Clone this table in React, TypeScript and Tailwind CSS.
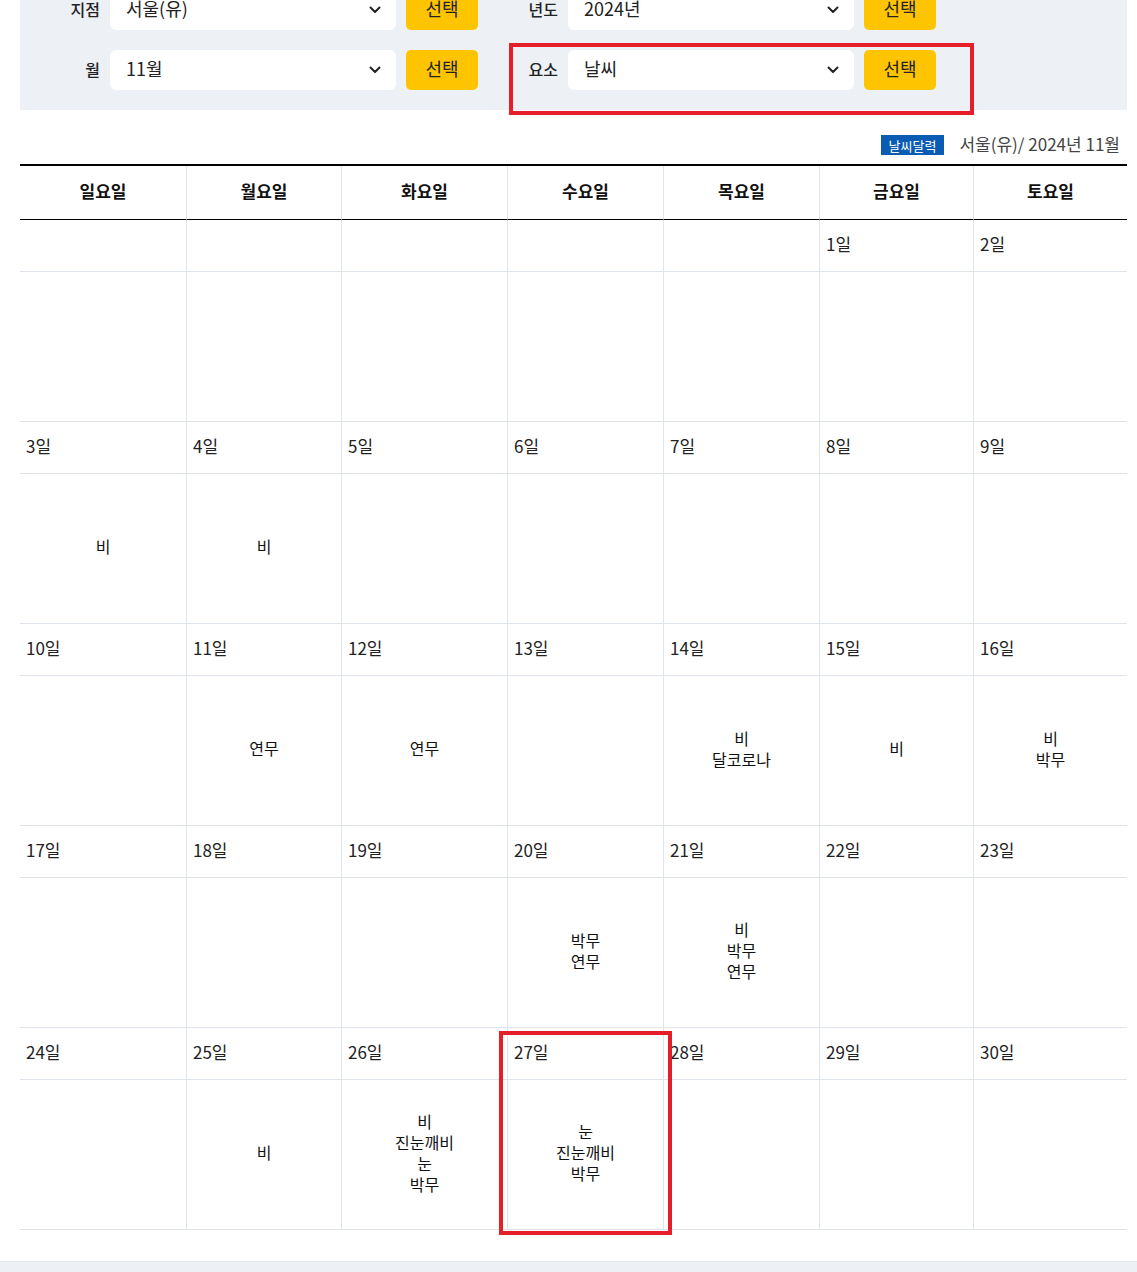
import React from "react";

const Chevron = () => (
  <svg width="12" height="8" viewBox="0 0 12 8" fill="none">
    <polyline points="1.5,1.5 6,6 10.5,1.5" stroke="#222" strokeWidth="2" strokeLinecap="round" strokeLinejoin="round" />
  </svg>
);

function Field({ label, value }: { label: string; value: string }) {
  return (
    <div className="flex w-[458px] items-center gap-[10px]">
      <div className="w-[80px] pb-[3px] text-right text-[16px] font-medium text-[#222]">{label}</div>
      <div className="flex h-[40px] w-[286px] items-center justify-between rounded-[6px] bg-white pl-[16px] pr-[15px] text-[18px] text-[#222]">
        <span className="pb-[3px]">{value}</span>
        <Chevron />
      </div>
      <button className="h-[40px] w-[72px] rounded-[5px] bg-[#ffc400] pb-[3px] text-[18px] text-[#222]">선택</button>
    </div>
  );
}

const days = ["일요일", "월요일", "화요일", "수요일", "목요일", "금요일", "토요일"];

type Cell = { d: string; items: string[] };
const weeks: Cell[][] = [
  [
    { d: "", items: [] },
    { d: "", items: [] },
    { d: "", items: [] },
    { d: "", items: [] },
    { d: "", items: [] },
    { d: "1일", items: [] },
    { d: "2일", items: [] },
  ],
  [
    { d: "3일", items: ["비"] },
    { d: "4일", items: ["비"] },
    { d: "5일", items: [] },
    { d: "6일", items: [] },
    { d: "7일", items: [] },
    { d: "8일", items: [] },
    { d: "9일", items: [] },
  ],
  [
    { d: "10일", items: [] },
    { d: "11일", items: ["연무"] },
    { d: "12일", items: ["연무"] },
    { d: "13일", items: [] },
    { d: "14일", items: ["비", "달코로나"] },
    { d: "15일", items: ["비"] },
    { d: "16일", items: ["비", "박무"] },
  ],
  [
    { d: "17일", items: [] },
    { d: "18일", items: [] },
    { d: "19일", items: [] },
    { d: "20일", items: ["박무", "연무"] },
    { d: "21일", items: ["비", "박무", "연무"] },
    { d: "22일", items: [] },
    { d: "23일", items: [] },
  ],
  [
    { d: "24일", items: [] },
    { d: "25일", items: ["비"] },
    { d: "26일", items: ["비", "진눈깨비", "눈", "박무"] },
    { d: "27일", items: ["눈", "진눈깨비", "박무"] },
    { d: "28일", items: [] },
    { d: "29일", items: [] },
    { d: "30일", items: [] },
  ],
];

export default function App() {
  return (
    <div className="relative flex w-[1137px] flex-col bg-white font-['Noto_Sans_CJK_KR','Noto_Sans',sans-serif] text-[#222]">
      {/* filter panel */}
      <div className="-mt-[30px] ml-[20px] mr-[10px] flex flex-col gap-[20px] bg-[#edf0f5] py-[20px]">
        <div className="flex">
          <Field label="지점" value="서울(유)" />
          <Field label="년도" value="2024년" />
        </div>
        <div className="flex">
          <Field label="월" value="11월" />
          <Field label="요소" value="날씨" />
        </div>
      </div>

      {/* caption */}
      <div className="ml-[20px] mr-[10px] mt-[16px] flex h-[38px] items-center justify-end gap-[15px] pr-[7px]">
        <span className="flex h-[20px] items-center bg-[#0a5bb2] px-[8px] text-[13px] leading-none text-white">날씨달력</span>
        <span className="pb-[3px] text-[17px] text-[#444]">서울(유)/ 2024년 11월</span>
      </div>

      {/* calendar */}
      <div className="ml-[20px] mr-[10px] grid grid-cols-[166px_155px_166px_156px_156px_154px_154px] border-t-2 border-black">
        {days.map((d, i) => (
          <div
            key={d}
            className={`flex h-[54px] items-center justify-center border-b border-b-black pb-[3px] text-[17px] font-bold text-[#111] ${i > 0 ? "border-l border-l-[#dfe3ea]" : ""}`}
          >
            {d}
          </div>
        ))}
        {weeks.map((w, wi) => (
          <React.Fragment key={wi}>
            {w.map((c, i) => (
              <div
                key={"d" + i}
                className={`flex h-[52px] items-center border-b border-b-[#dfe3ea] pb-[3px] pl-[6px] text-[17px] text-[#222] ${i > 0 ? "border-l border-l-[#dfe3ea]" : ""}`}
              >
                {c.d}
              </div>
            ))}
            {w.map((c, i) => (
              <div
                key={"c" + i}
                className={`flex h-[150px] flex-col items-center justify-center border-b border-b-[#dfe3ea] pb-[4px] text-[16px] leading-[21px] text-[#111] ${i > 0 ? "border-l border-l-[#dfe3ea]" : ""}`}
              >
                {c.items.map((t, k) => (
                  <span key={k}>{t}</span>
                ))}
              </div>
            ))}
          </React.Fragment>
        ))}
      </div>

      <div className="mt-[31px] h-[40px] w-full border-t border-[#e3e7ed] bg-[#edf0f5]" />

      {/* annotation boxes */}
      <div className="pointer-events-none absolute left-[509px] top-[43px] h-[72px] w-[465px] border-4 border-[#e51f2a]" />
      <div className="pointer-events-none absolute left-[499px] top-[1031px] h-[204px] w-[173px] border-4 border-[#e51f2a]" />
    </div>
  );
}
